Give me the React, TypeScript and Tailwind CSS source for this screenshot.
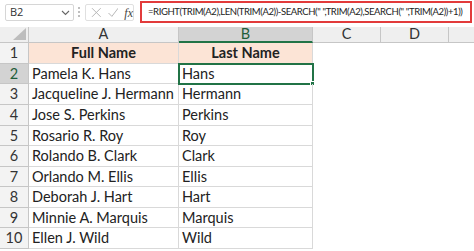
import React from "react";

const rows: [string, string][] = [
  ["Pamela K. Hans", "Hans"],
  ["Jacqueline J. Hermann", "Hermann"],
  ["Jose S. Perkins", "Perkins"],
  ["Rosario R. Roy", "Roy"],
  ["Rolando B. Clark", "Clark"],
  ["Orlando M. Ellis", "Ellis"],
  ["Deborah J. Hart", "Hart"],
  ["Minnie A. Marquis", "Marquis"],
  ["Ellen J. Wild", "Wild"],
];
const heights = ["h-[20px]", "h-[21px]", "h-[21px]", "h-[20px]", "h-[21px]", "h-[20px]", "h-[21px]", "h-[20px]", "h-[21px]"];

export default function App() {
  return (
    <div className="w-[474px] h-[251px] overflow-hidden bg-white text-[#222]" style={{ fontFamily: "Lato, 'Noto Sans', sans-serif" }}>
      {/* Formula bar */}
      <div className="flex h-[27px] items-start pt-[1px]">
        <div className="ml-[5px] mt-[3px] flex h-[17px] w-[69px] shrink-0 items-center justify-between rounded-[2px] border border-[#d6d6d6] pl-[4px] pr-[3px]">
          <span className="text-[11px] text-[#333]" style={{ fontFamily: "'Open Sans', sans-serif" }}>B2</span>
          <svg width="9" height="6" viewBox="0 0 9 6"><path d="M1 1 L4.5 4.5 L8 1" fill="none" stroke="#666" strokeWidth="1.1" /></svg>
        </div>
        <div className="ml-[4px] mt-[6px] flex shrink-0 flex-col gap-[2px]">
          <span className="h-[2px] w-[2px] rounded-full bg-[#aaa]" />
          <span className="h-[2px] w-[2px] rounded-full bg-[#aaa]" />
          <span className="h-[2px] w-[2px] rounded-full bg-[#aaa]" />
        </div>
        <div className="ml-[5px] mt-[3px] flex h-[17px] w-[49px] shrink-0 items-center gap-[6px] rounded-[2px] border border-[#e0e0e0] pl-[5px]">
          <svg width="11" height="11" viewBox="0 0 11 11"><path d="M1 1 L10 10 M10 1 L1 10" stroke="#b5b5b5" strokeWidth="1" /></svg>
          <svg width="11" height="11" viewBox="0 0 11 11"><path d="M0.5 6 L4 9.5 L10.5 1" fill="none" stroke="#b5b5b5" strokeWidth="1" /></svg>
          <span className="text-[12px] italic text-[#444]" style={{ fontFamily: "'Liberation Serif', serif" }}>fx</span>
        </div>
        <div className="ml-[6px] mr-[2px] flex h-[22px] min-w-0 flex-1 items-center overflow-hidden border-2 border-[#e23b3b] pl-[6px]">
          <span className="whitespace-nowrap text-[9.5px] tracking-[-0.4px] text-[#222]" style={{ fontFamily: "Lato, sans-serif" }}>
            =RIGHT(TRIM(A2),LEN(TRIM(A2))-SEARCH(" ",TRIM(A2),SEARCH(" ",TRIM(A2))+1))
          </span>
        </div>
      </div>

      {/* Column headers */}
      <div className="flex h-[16px] text-[14.5px] leading-none">
        <div className="relative w-[29px] shrink-0 border-r border-b border-[#c6c6c6] bg-[#efefef]">
          <svg className="absolute right-[2px] bottom-[2px]" width="13" height="12" viewBox="0 0 13 12"><polygon points="13,0 13,12 0,12" fill="#bdbdbd" /></svg>
        </div>
        <div className="flex w-[150px] shrink-0 items-center justify-center border-r border-b border-[#c6c6c6] bg-[#efefef] text-[#333]">A</div>
        <div className="flex w-[134px] shrink-0 items-center justify-center border-r border-[#c6c6c6] border-b-2 border-b-[#217346] bg-[#d3d3d3] text-[#1f5e3a]">B</div>
        <div className="flex w-[68px] shrink-0 items-center justify-center border-r border-b border-[#c6c6c6] bg-[#efefef] text-[#333]">C</div>
        <div className="flex w-[68px] shrink-0 items-center justify-center border-r border-b border-[#c6c6c6] bg-[#efefef] text-[#333]">D</div>
        <div className="flex-1 border-b border-[#c6c6c6] bg-[#efefef]" />
      </div>

      {/* Row 1 */}
      <div className="flex h-[21px] text-[14.5px]">
        <div className="flex w-[29px] shrink-0 items-center justify-center border-r border-b border-[#c6c6c6] bg-[#f3f3f3] text-[#333]">1</div>
        <div className="flex w-[150px] shrink-0 items-center justify-center border-r border-b border-[#d9d9d9] bg-[#fce4d6] font-bold">Full Name</div>
        <div className="flex w-[134px] shrink-0 items-center justify-center border-r border-b border-[#d9d9d9] bg-[#fce4d6] font-bold">Last Name</div>
        <div className="flex-1" />
      </div>

      {rows.map(([full, last], i) => (
        <div key={i} className={`flex ${heights[i]} text-[14.5px]`}>
          <div className={`flex w-[29px] shrink-0 items-center justify-center border-r border-b border-[#c6c6c6] ${i === 0 ? "bg-[#d3d3d3] text-[#1f5e3a]" : "bg-[#f3f3f3] text-[#333]"}`}>{i + 2}</div>
          <div className="flex w-[150px] shrink-0 items-center border-r border-b border-[#d9d9d9] pl-[3px] whitespace-nowrap">{full}</div>
          <div className={`relative flex w-[134px] shrink-0 items-center border-r border-b border-[#d9d9d9] pl-[3px] whitespace-nowrap ${i === 0 ? "outline-2 outline-[#217346] -outline-offset-1" : ""}`}>
            {last}
            {i === 0 && <span className="absolute -right-[3px] -bottom-[3px] h-[5px] w-[5px] border border-white bg-[#217346]" />}
          </div>
          <div className="flex-1" />
        </div>
      ))}
    </div>
  );
}
